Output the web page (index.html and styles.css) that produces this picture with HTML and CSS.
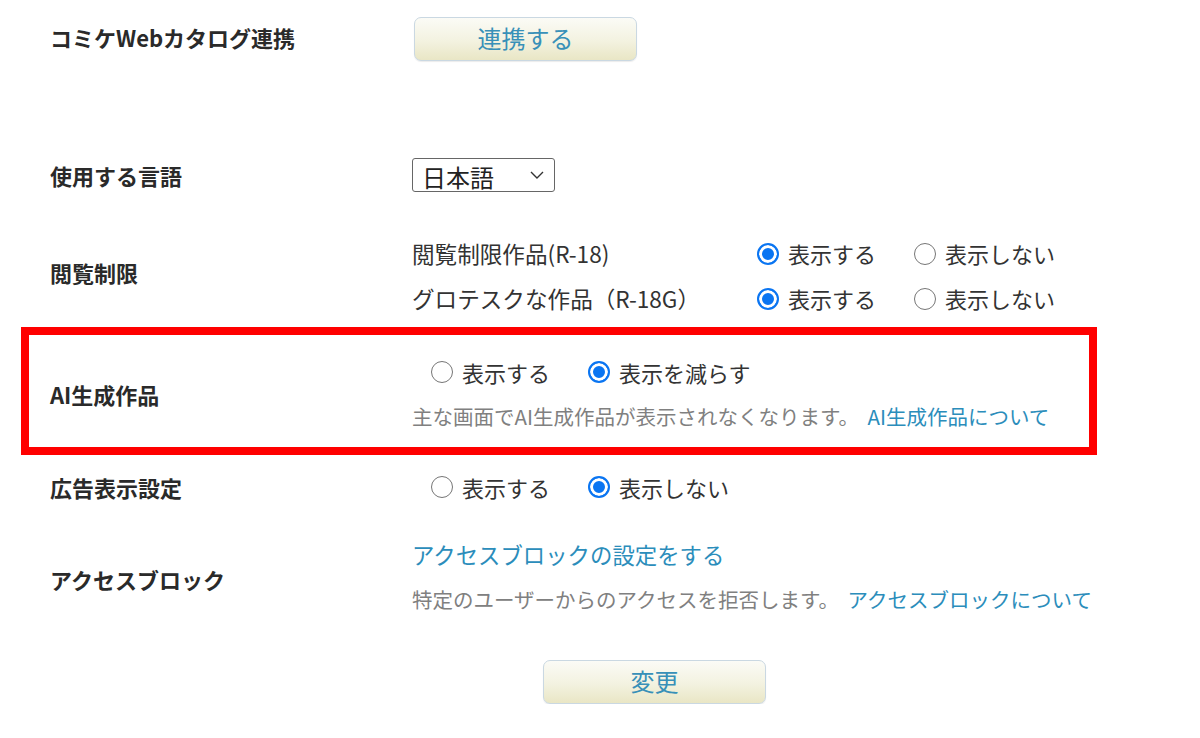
FILE: index.html
```html
<!DOCTYPE html>
<html lang="ja">
<head>
    <meta charset="UTF-8">
    <meta name="viewport" content="width=device-width, initial-scale=1.0">
    <title>ユーザー設定</title>
    <link rel="stylesheet" href="styles.css">
</head>
<body>

    <form class="settings" id="settingsForm">

        <div class="row row-catalog">
            <div class="label">コミケWebカタログ連携</div>
            <div class="value">
                <button type="button" class="btn">連携する</button>
            </div>
        </div>

        <div class="row row-lang">
            <div class="label">使用する言語</div>
            <div class="value">
                <span class="select-box">
                    <select id="lang">
                        <option>日本語</option>
                        <option>English</option>
                    </select>
                    <svg width="16" height="10" viewBox="0 0 16 10"><path d="M2 2 L8 8 L14 2" fill="none" stroke="#333" stroke-width="1.4"/></svg>
                </span>
            </div>
        </div>

        <div class="row row-restrict">
            <div class="label">閲覧制限</div>
            <div class="value">
                <div class="sub-row">
                    <span class="sub-label">閲覧制限作品(R-18)</span>
                    <label class="radio"><input type="radio" name="r18" checked>表示する</label>
                    <label class="radio"><input type="radio" name="r18">表示しない</label>
                </div>
                <div class="sub-row">
                    <span class="sub-label">グロテスクな作品（R-18G）</span>
                    <label class="radio"><input type="radio" name="r18g" checked>表示する</label>
                    <label class="radio"><input type="radio" name="r18g">表示しない</label>
                </div>
            </div>
        </div>

        <div class="row row-ai highlight">
            <div class="label">AI生成作品</div>
            <div class="value">
                <div class="radios">
                    <label class="radio"><input type="radio" name="ai">表示する</label>
                    <label class="radio"><input type="radio" name="ai" checked>表示を減らす</label>
                </div>
                <p class="note">主な画面でAI生成作品が表示されなくなります。 <a href="#">AI生成作品について</a></p>
            </div>
        </div>

        <div class="row row-ads">
            <div class="label">広告表示設定</div>
            <div class="value">
                <div class="radios">
                    <label class="radio"><input type="radio" name="ads">表示する</label>
                    <label class="radio"><input type="radio" name="ads" checked>表示しない</label>
                </div>
            </div>
        </div>

        <div class="row row-block">
            <div class="label">アクセスブロック</div>
            <div class="value">
                <a href="#" class="big-link">アクセスブロックの設定をする</a>
                <p class="note">特定のユーザーからのアクセスを拒否します。 <a href="#">アクセスブロックについて</a></p>
            </div>
        </div>

        <div class="submit">
            <button type="button" class="btn">変更</button>
        </div>

    </form>

</body>
</html>
```

FILE: styles.css
```css
body {
    margin: 0;
    padding: 0;
    background-color: #fff;
    color: #333;
    font-family: "Noto Sans CJK JP", "Noto Sans", sans-serif;
    font-size: 22px;
    line-height: 1.3;
}
.settings {
    width: 1076px;
    margin-left: 21px;
    padding-top: 17px;
}
.row {
    display: grid;
    grid-template-columns: 362px 1fr;
    align-items: center;
    border: 8px solid transparent;
    padding: 0 21px;
}
.label {
    font-weight: bold;
    font-size: 22px;
    color: #2a2a2a;
    white-space: nowrap;
}
.value {
    line-height: 44px;
    white-space: nowrap;
}
a {
    color: #2b8dbb;
    text-decoration: none;
}
.btn {
    width: 223px;
    height: 44px;
    font-family: inherit;
    font-size: 24px;
    line-height: 40px;
    color: #3890b8;
    background: linear-gradient(#fbfbf6, #f3f2e0 55%, #e9e6c5);
    border: 1px solid #cad8e2;
    border-radius: 7px;
    box-shadow: 0 1px 1px rgba(0, 0, 0, 0.08);
    cursor: pointer;
    padding: 0 0 4px;
}
.row-catalog {
    margin-top: -8px;
}
.row-catalog .label {
    margin-bottom: 3px;
}
.row-catalog .value {
    line-height: normal;
    padding-left: 2px;
}
.row-lang {
    margin-top: 81px;
}
.row-lang .value {
    line-height: normal;
}
.select-box {
    display: inline-flex;
    align-items: center;
    width: 141px;
    height: 32px;
    border: 1px solid #666;
    border-radius: 3px;
    box-sizing: content-box;
}
.select-box select {
    appearance: none;
    border: none;
    background: none;
    font-family: inherit;
    font-size: 24px;
    color: #222;
    padding: 0 0 0 9px;
    width: 116px;
    height: 32px;
    outline: none;
}
.row-restrict {
    margin-top: 22px;
}
.row-restrict .label {
    margin-bottom: 7px;
}
.row-restrict .value {
    line-height: 45px;
}
.sub-row {
    display: flex;
    align-items: center;
}
.sub-label {
    width: 345px;
    flex-shrink: 0;
    font-size: 22.6px;
}
.radio {
    display: inline-flex;
    align-items: center;
    gap: 9px;
    margin-right: 38px;
    flex-shrink: 0;
}
.radio input {
    appearance: none;
    width: 22px;
    height: 22px;
    margin: 0;
    flex-shrink: 0;
    border: 1.6px solid #767676;
    border-radius: 50%;
    background: #fff;
    box-sizing: border-box;
}
.radio input:checked {
    border: 2px solid #0a75f2;
    background: #0a75f2;
    box-shadow: inset 0 0 0 3px #fff;
}
.radios {
    padding-left: 19px;
    display: flex;
}
.note {
    margin: 0;
    font-size: 20.5px;
    color: #808080;
}
.note a {
    margin-left: 4px;
}
.highlight {
    border-color: #ff0000;
    margin-top: -2px;
    padding-top: 15px;
    padding-bottom: 9px;
}
.highlight .label {
    margin-top: 0;
}
.row-ads {
    margin-top: 2px;
}
.row-block {
    margin-top: 7px;
}
.row-block .value {
    line-height: 45px;
}
.row-block .label {
    margin-top: 4px;
}
.big-link {
    font-size: 22.4px;
}
.submit {
    margin-top: 30px;
    padding-left: 522px;
}
```
